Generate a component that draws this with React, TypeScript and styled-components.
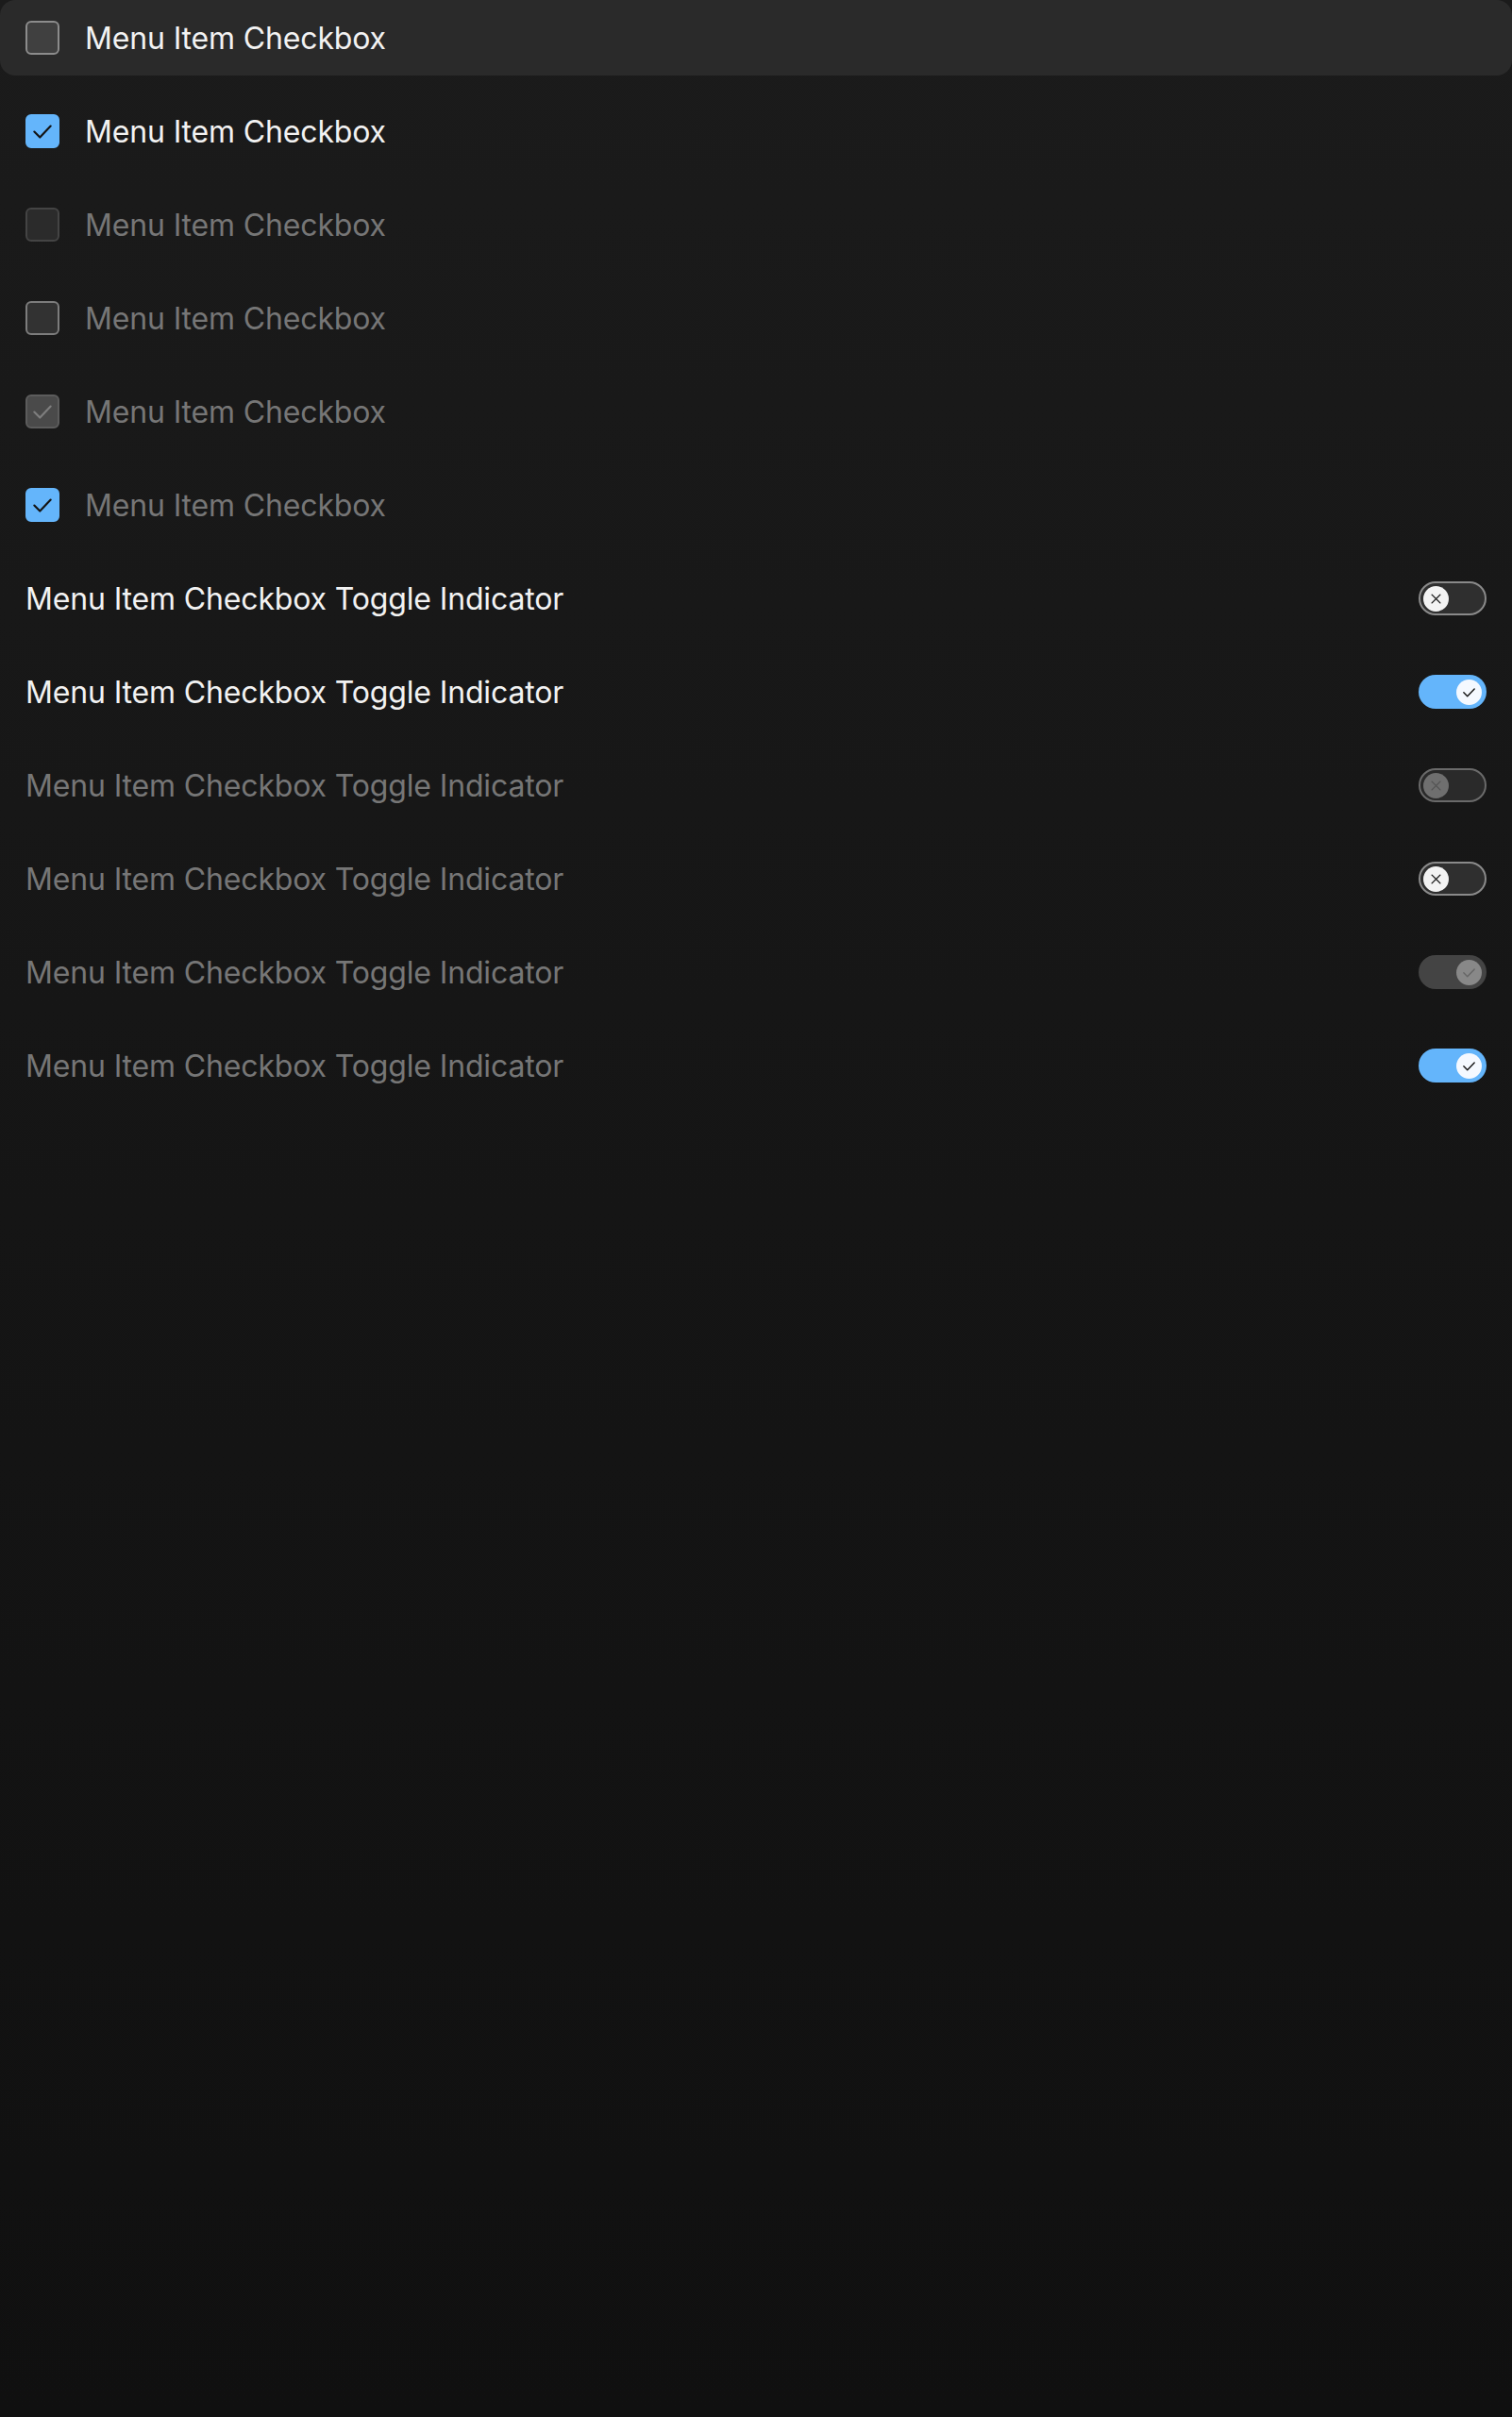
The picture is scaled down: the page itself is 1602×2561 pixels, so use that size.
import React from "react";
import styled, { createGlobalStyle, css } from "styled-components";

const Global = createGlobalStyle`
  html, body { margin: 0; padding: 0; }
  body {
    background: linear-gradient(180deg, #1b1b1b 0%, #151515 50%, #101010 100%);
    min-height: 100vh;
    font-family: Inter, "Noto Sans", sans-serif;
    -webkit-font-smoothing: antialiased;
  }
`;

const Page = styled.div`
  min-height: 2561px;
  box-sizing: border-box;
  display: flex;
  flex-direction: column;
`;

const List = styled.div`
  display: flex;
  flex-direction: column;
  gap: 19px;
`;

const Row = styled.div<{ $highlight?: boolean; $toggle?: boolean }>`
  height: 80px;
  box-sizing: border-box;
  display: flex;
  align-items: center;
  gap: 27px;
  padding: 0 27px;
  border-radius: 16px;
  justify-content: ${(p) => (p.$toggle ? "space-between" : "flex-start")};
  background: ${(p) => (p.$highlight ? "#2a2a2a" : "transparent")};
`;

const Label = styled.span<{ $muted?: boolean }>`
  font-size: 32px;
  font-weight: 400;
  letter-spacing: -0.15px;
  color: ${(p) => (p.$muted ? "#767676" : "#f2f2f2")};
  white-space: nowrap;
`;

type BoxVariant = "default" | "checked" | "disabled" | "muted" | "disabledChecked" | "checkedMuted";

const boxStyles: Record<BoxVariant, ReturnType<typeof css>> = {
  default: css`
    background: #404040;
    border-color: #8c8c8c;
  `,
  checked: css`
    background: #64b5fb;
    border-color: #64b5fb;
  `,
  disabled: css`
    background: #2b2b2b;
    border-color: #444444;
  `,
  muted: css`
    background: #323232;
    border-color: #7d7d7d;
  `,
  disabledChecked: css`
    background: #4a4a4a;
    border-color: #5c5c5c;
  `,
  checkedMuted: css`
    background: #64b5fb;
    border-color: #64b5fb;
  `,
};

const Box = styled.span<{ $v: BoxVariant }>`
  width: 36px;
  height: 36px;
  box-sizing: border-box;
  border: 2px solid;
  border-radius: 6px;
  display: flex;
  align-items: center;
  justify-content: center;
  flex-shrink: 0;
  ${(p) => boxStyles[p.$v]}
`;

const CheckMark = ({ color, size }: { color: string; size: number }) => (
  <svg width={size} height={size} viewBox="0 0 24 24" fill="none">
    <path d="M4 12.5 L9.5 18 L20 7" stroke={color} strokeWidth={2} strokeLinecap="round" strokeLinejoin="round" />
  </svg>
);

const XMark = ({ color, size }: { color: string; size: number }) => (
  <svg width={size} height={size} viewBox="0 0 24 24" fill="none">
    <path d="M5 5 L19 19 M19 5 L5 19" stroke={color} strokeWidth={2.2} strokeLinecap="round" />
  </svg>
);

const Checkbox = ({ v }: { v: BoxVariant }) => {
  const checked = v === "checked" || v === "checkedMuted" || v === "disabledChecked";
  return (
    <Box $v={v}>
      {checked && <CheckMark color={v === "disabledChecked" ? "#7e7e7e" : "#141414"} size={26} />}
    </Box>
  );
};

type ToggleVariant = "off" | "on" | "disabledOff" | "disabledOn";

const Track = styled.span<{ $v: ToggleVariant }>`
  width: 72px;
  height: 36px;
  box-sizing: border-box;
  border-radius: 18px;
  display: flex;
  align-items: center;
  padding: 0 3px;
  flex-shrink: 0;
  justify-content: ${(p) => (p.$v === "on" || p.$v === "disabledOn" ? "flex-end" : "flex-start")};
  ${(p) =>
    p.$v === "off" &&
    css`
      background: #2f2f2f;
      border: 2px solid #8a8a8a;
    `}
  ${(p) =>
    p.$v === "disabledOff" &&
    css`
      background: #2a2a2a;
      border: 2px solid #6a6a6a;
    `}
  ${(p) =>
    p.$v === "on" &&
    css`
      background: #64b5fb;
      padding: 0 5px;
    `}
  ${(p) =>
    p.$v === "disabledOn" &&
    css`
      background: #444444;
      padding: 0 5px;
    `}
`;

const Knob = styled.span<{ $v: ToggleVariant }>`
  width: 27px;
  height: 27px;
  border-radius: 50%;
  display: flex;
  align-items: center;
  justify-content: center;
  background: ${(p) =>
    p.$v === "off" ? "#f3f3f3" : p.$v === "on" ? "#f5f9ff" : p.$v === "disabledOff" ? "#6f6f6f" : "#888888"};
`;

const Toggle = ({ v }: { v: ToggleVariant }) => (
  <Track $v={v}>
    <Knob $v={v}>
      {v === "off" && <XMark color="#1a1a1a" size={15} />}
      {v === "disabledOff" && <XMark color="#545454" size={15} />}
      {v === "on" && <CheckMark color="#141414" size={17} />}
      {v === "disabledOn" && <CheckMark color="#666666" size={17} />}
    </Knob>
  </Track>
);

const checkboxRows: { v: BoxVariant; muted: boolean; highlight?: boolean }[] = [
  { v: "default", muted: false, highlight: true },
  { v: "checked", muted: false },
  { v: "disabled", muted: true },
  { v: "muted", muted: true },
  { v: "disabledChecked", muted: true },
  { v: "checkedMuted", muted: true },
];

const toggleRows: { v: ToggleVariant; muted: boolean }[] = [
  { v: "off", muted: false },
  { v: "on", muted: false },
  { v: "disabledOff", muted: true },
  { v: "off", muted: true },
  { v: "disabledOn", muted: true },
  { v: "on", muted: true },
];

export default function App() {
  return (
    <>
      <Global />
      <Page>
        <List>
          {checkboxRows.map((r, i) => (
            <Row key={`c${i}`} $highlight={r.highlight}>
              <Checkbox v={r.v} />
              <Label $muted={r.muted}>Menu Item Checkbox</Label>
            </Row>
          ))}
          {toggleRows.map((r, i) => (
            <Row key={`t${i}`} $toggle>
              <Label $muted={r.muted}>Menu Item Checkbox Toggle Indicator</Label>
              <Toggle v={r.v} />
            </Row>
          ))}
        </List>
      </Page>
    </>
  );
}
